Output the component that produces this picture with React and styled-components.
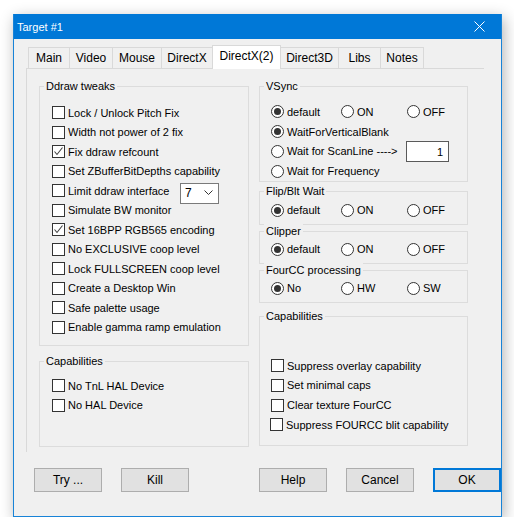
import React from 'react'
import styled, { createGlobalStyle } from 'styled-components'

const Global = createGlobalStyle`
  body {
    margin: 0;
    background: #ffffff;
    font-family: "Liberation Sans", Arial, sans-serif;
    color: #000;
  }
`

const Window = styled.div`
  margin: 14px 0 0 13px;
  width: 489px;
  height: 503px;
  box-sizing: border-box;
  border: 1px solid #1883d7;
  background: #f0f0f0;
  box-shadow: 2px 4px 14px rgba(0, 0, 0, 0.3);
  display: flex;
  flex-direction: column;
`

const TitleBar = styled.div`
  height: 25px;
  flex: 0 0 25px;
  background: #0078d7;
  color: #fff;
  font-size: 11px;
  display: flex;
  align-items: center;
  padding: 0 0 0 3px;
  margin-top: -1px;
`

const TitleText = styled.span`
  flex: 1;
`

const CloseBox = styled.div`
  width: 46px;
  display: flex;
  justify-content: center;
  align-items: center;
  margin-right: -1px;
`

const Body = styled.div`
  padding: 6px 0 0 12px;
  display: flex;
  flex-direction: column;
`

const TabStrip = styled.div`
  display: flex;
  align-items: flex-end;
  height: 23px;
  padding-left: 2px;
  position: relative;
  z-index: 1;
`

const Tab = styled.div`
  box-sizing: border-box;
  width: ${p => p.$w}px;
  height: ${p => (p.$active ? 24 : 21)}px;
  margin-right: -1px;
  margin-bottom: ${p => (p.$active ? -1 : 0)}px;
  border: 1px solid #d9d9d9;
  border-bottom: none;
  background: ${p => (p.$active ? '#ffffff' : '#f0f0f0')};
  font-size: 12px;
  display: flex;
  justify-content: center;
  align-items: center;
  padding-bottom: ${p => (p.$active ? 4 : 0)}px;
  z-index: ${p => (p.$active ? 2 : 1)};
`

const Panel = styled.div`
  box-sizing: border-box;
  width: 458px;
  height: 384px;
  border-top: 1px solid #d9d9d9;
  border-left: 1px solid #d9d9d9;
  padding: 17px 0 0 12px;
  display: flex;
  gap: 10px;
`

const Column = styled.div`
  width: ${p => p.$w}px;
  display: flex;
  flex-direction: column;
`

const Group = styled.div`
  position: relative;
  box-sizing: border-box;
  height: ${p => p.$h}px;
  margin-top: ${p => p.$mt || 0}px;
  border: 1px solid #dcdcdc;
  padding: ${p => p.$pt}px 0 0 ${p => p.$pl || 11}px;
  display: flex;
  flex-direction: column;
`

const Legend = styled.span`
  position: absolute;
  top: -8px;
  left: 4px;
  padding: 0 2px;
  background: #f0f0f0;
  font-size: 11px;
  line-height: 14px;
`

const Row = styled.div`
  height: ${p => p.$h || 19.5}px;
  display: flex;
  align-items: center;
  font-size: 11px;
  margin-left: ${p => p.$shift || 0}px;
`

const RadioGrid = styled.div`
  height: 20px;
  display: grid;
  grid-template-columns: 70px 66px auto;
  align-items: center;
  font-size: 11px;
`

const Item = styled.label`
  display: flex;
  align-items: center;
  gap: 3px;
  white-space: nowrap;
  width: ${p => (p.$w ? `${p.$w}px` : 'auto')};
  flex: ${p => (p.$w ? `0 0 ${p.$w}px` : '0 0 auto')};
`

const Box = styled.span`
  box-sizing: border-box;
  width: 13px;
  height: 13px;
  flex: 0 0 13px;
  border: 1px solid #333;
  background: #fff;
  display: flex;
  align-items: center;
  justify-content: center;
`

const Circle = styled.span`
  box-sizing: border-box;
  width: 13px;
  height: 13px;
  flex: 0 0 13px;
  border-radius: 50%;
  border: 1px solid #333;
  background: #fff;
  display: flex;
  align-items: center;
  justify-content: center;
  &::after {
    content: '';
    display: ${p => (p.$on ? 'block' : 'none')};
    width: 7px;
    height: 7px;
    border-radius: 50%;
    background: #333;
  }
`

const Combo = styled.div`
  box-sizing: border-box;
  width: 39px;
  height: 21px;
  margin-top: 5px;
  border: 1px solid #7a7a7a;
  background: #fff;
  display: flex;
  align-items: center;
  justify-content: space-between;
  padding: 0 5px 0 4px;
  font-size: 12px;
`

const Edit = styled.div`
  box-sizing: border-box;
  width: 43px;
  height: 21px;
  margin-top: 1px;
  border: 1px solid #5a5a5a;
  background: #fff;
  display: flex;
  align-items: center;
  justify-content: flex-end;
  padding-right: 5px;
  font-size: 11px;
`

const Footer = styled.div`
  display: flex;
  gap: 19px;
  margin-top: 16px;
  padding-left: 8px;
`

const Spacer = styled.div`
  width: ${p => p.$w}px;
`

const Button = styled.button`
  box-sizing: border-box;
  width: 68px;
  height: 24px;
  padding: 0;
  border: ${p => (p.$def ? '2px solid #0078d7' : '1px solid #adadad')};
  background: #e1e1e1;
  font-family: "Liberation Sans", Arial, sans-serif;
  font-size: 12px;
  color: #000;
`

const Check = ({ label, on, w }) => (
  <Item $w={w}>
    <Box>
      {on && (
        <svg width="11" height="11" viewBox="0 0 11 11">
          <polyline points="1.5,5.5 4,8.5 9.5,1.5" fill="none" stroke="#444" strokeWidth="1.1" />
        </svg>
      )}
    </Box>
    {label}
  </Item>
)

const Radio = ({ label, on, w }) => (
  <Item $w={w}>
    <Circle $on={on} />
    {label}
  </Item>
)

const tabs = [
  ['Main', 42], ['Video', 44], ['Mouse', 50], ['DirectX', 52],
  ['DirectX(2)', 69], ['Direct3D', 59], ['Libs', 43], ['Notes', 44],
]

const ddraw = [
  ['Lock / Unlock Pitch Fix'],
  ['Width not power of 2 fix'],
  ['Fix ddraw refcount', true],
  ['Set ZBufferBitDepths capability'],
  ['Limit ddraw interface', false, true],
  ['Simulate BW monitor'],
  ['Set 16BPP RGB565 encoding', true],
  ['No EXCLUSIVE coop level'],
  ['Lock FULLSCREEN coop level'],
  ['Create a Desktop Win'],
  ['Safe palette usage'],
  ['Enable gamma ramp emulation'],
]

const TriRadio = ({ labels }) => (
  <RadioGrid>
    <Radio label={labels[0]} on />
    <Radio label={labels[1]} />
    <Radio label={labels[2]} />
  </RadioGrid>
)

export default function App() {
  return (
    <>
      <Global />
      <Window>
        <TitleBar>
          <TitleText>Target #1</TitleText>
          <CloseBox>
            <svg width="11" height="11" viewBox="0 0 11 11">
              <path d="M0.5 0.5 L10.5 10.5 M10.5 0.5 L0.5 10.5" stroke="#fff" strokeWidth="1" />
            </svg>
          </CloseBox>
        </TitleBar>
        <Body>
          <TabStrip>
            {tabs.map(([t, w]) => (
              <Tab key={t} $w={w} $active={t === 'DirectX(2)'}>{t}</Tab>
            ))}
          </TabStrip>
          <Panel>
            <Column $w={210}>
              <Group $h={260} $pt={16} $pl={12}>
                <Legend>Ddraw tweaks</Legend>
                {ddraw.map(([label, on, combo]) => (
                  <Row key={label}>
                    <Check label={label} on={on} w={combo ? 128 : undefined} />
                    {combo && (
                      <Combo>
                        <span>7</span>
                        <svg width="9" height="6" viewBox="0 0 9 6">
                          <polyline points="0.5,0.5 4.5,4.5 8.5,0.5" fill="none" stroke="#333" strokeWidth="1" />
                        </svg>
                      </Combo>
                    )}
                  </Row>
                ))}
              </Group>
              <Group $h={86} $mt={15} $pt={14} $pl={12}>
                <Legend>Capabilities</Legend>
                <Row><Check label="No TnL HAL Device" /></Row>
                <Row><Check label="No HAL Device" /></Row>
              </Group>
            </Column>
            <Column $w={209}>
              <Group $h={96} $pt={15}>
                <Legend>VSync</Legend>
                <TriRadio labels={['default', 'ON', 'OFF']} />
                <Row $h={20}><Radio label="WaitForVerticalBlank" on /></Row>
                <Row $h={20}>
                  <Radio label="Wait for ScanLine ---->" w={135} />
                  <Edit>1</Edit>
                </Row>
                <Row $h={20}><Radio label="Wait for Frequency" /></Row>
              </Group>
              <Group $h={34} $mt={9} $pt={8}>
                <Legend>Flip/Blt Wait</Legend>
                <TriRadio labels={['default', 'ON', 'OFF']} />
              </Group>
              <Group $h={33} $mt={6} $pt={7}>
                <Legend>Clipper</Legend>
                <TriRadio labels={['default', 'ON', 'OFF']} />
              </Group>
              <Group $h={33} $mt={6} $pt={7}>
                <Legend>FourCC processing</Legend>
                <TriRadio labels={['No', 'HW', 'SW']} />
              </Group>
              <Group $h={130} $mt={13} $pt={39}>
                <Legend>Capabilities</Legend>
                <Row $h={19.67}><Check label="Suppress overlay capability" /></Row>
                <Row $h={19.67}><Check label="Set minimal caps" /></Row>
                <Row $h={19.67}><Check label="Clear texture FourCC" /></Row>
                <Row $h={19.67} $shift={-1}><Check label="Suppress FOURCC blit capability" /></Row>
              </Group>
            </Column>
          </Panel>
          <Footer>
            <Button>Try ...</Button>
            <Button>Kill</Button>
            <Spacer $w={32} />
            <Button>Help</Button>
            <Button>Cancel</Button>
            <Button $def>OK</Button>
          </Footer>
        </Body>
      </Window>
    </>
  )
}
